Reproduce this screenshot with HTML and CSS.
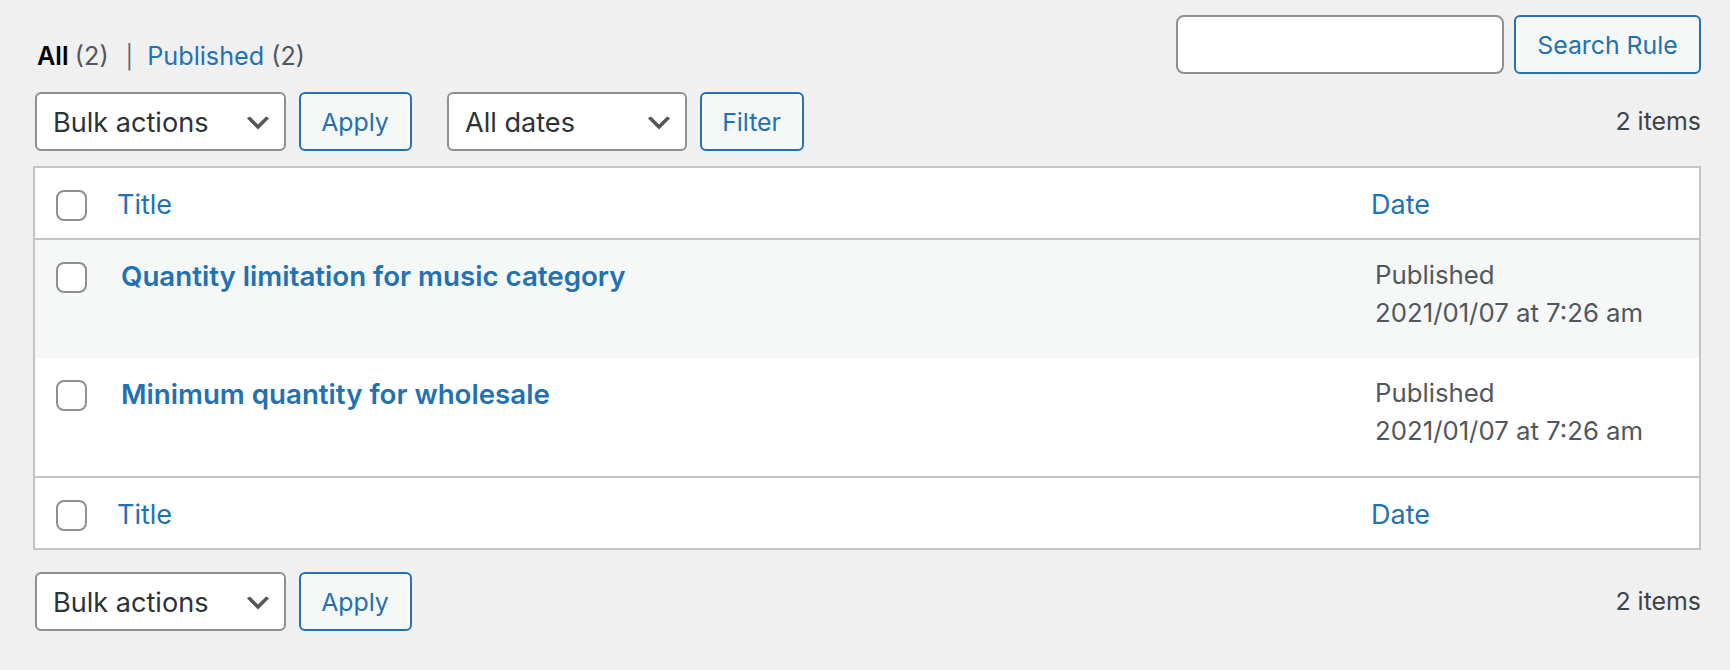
FILE: index.html
```html
<!DOCTYPE html>
<html lang="en">
<head>
<meta charset="utf-8">
<title>Rules</title>
<link rel="stylesheet" href="styles.css">
</head>
<body>
<div class="wrap">
  <div class="top-row">
    <ul class="subsubsub">
      <li class="all"><a class="current" href="#">All <span class="count">(2)</span></a><span class="sep">|</span></li>
      <li class="publish"><a href="#">Published <span class="count">(2)</span></a></li>
    </ul>
    <div class="search-box">
      <input class="search-input" type="search" aria-label="Search Rule">
      <button class="button btn-search" type="button">Search Rule</button>
    </div>
  </div>

  <div class="tablenav">
    <div class="actions">
      <div class="select sel-bulk"><span>Bulk actions</span><svg class="chev" viewBox="0 0 20 20" width="32" height="32"><path d="M5 6l5 5 5-5 2 1-7 7-7-7 2-1z" fill="#555"/></svg></div>
      <button class="button btn-apply" type="button">Apply</button>
    </div>
    <div class="actions">
      <div class="select sel-dates"><span>All dates</span><svg class="chev" viewBox="0 0 20 20" width="32" height="32"><path d="M5 6l5 5 5-5 2 1-7 7-7-7 2-1z" fill="#555"/></svg></div>
      <button class="button btn-filter" type="button">Filter</button>
    </div>
    <div class="displaying-num">2 items</div>
  </div>

  <table class="widefat">
    <colgroup><col class="c-check"><col><col class="c-date"></colgroup>
    <thead>
      <tr>
        <th class="check-column"><span class="cb"></span></th>
        <th class="col-title"><a href="#">Title</a></th>
        <th class="col-date"><a href="#">Date</a></th>
      </tr>
    </thead>
    <tbody>
      <tr class="alt">
        <td class="check-column"><span class="cb"></span></td>
        <td class="col-title"><a class="row-title" href="#">Quantity limitation for music category</a></td>
        <td class="col-date">Published<br>2021/01/07 at 7:26 am</td>
      </tr>
      <tr>
        <td class="check-column"><span class="cb"></span></td>
        <td class="col-title"><a class="row-title" href="#">Minimum quantity for wholesale</a></td>
        <td class="col-date">Published<br>2021/01/07 at 7:26 am</td>
      </tr>
    </tbody>
    <tfoot>
      <tr>
        <th class="check-column"><span class="cb"></span></th>
        <th class="col-title"><a href="#">Title</a></th>
        <th class="col-date"><a href="#">Date</a></th>
      </tr>
    </tfoot>
  </table>

  <div class="tablenav bottom">
    <div class="actions">
      <div class="select sel-bulk"><span>Bulk actions</span><svg class="chev" viewBox="0 0 20 20" width="32" height="32"><path d="M5 6l5 5 5-5 2 1-7 7-7-7 2-1z" fill="#555"/></svg></div>
      <button class="button btn-apply" type="button">Apply</button>
    </div>
    <div class="displaying-num">2 items</div>
  </div>
</div>
</body>
</html>
```

FILE: styles.css
```css
html, body {
  margin: 0;
  padding: 0;
  background: #f0f0f1;
}
body {
  font-family: Inter, "Liberation Sans", sans-serif;
  color: #3c434a;
  font-size: 26px;
  line-height: 1.5;
}
a {
  color: #2271b1;
  text-decoration: none;
}
.wrap {
  padding: 15px 29px 0 33px;
}
.top-row {
  display: flex;
  justify-content: space-between;
  align-items: flex-start;
  height: 59px;
}
.subsubsub {
  list-style: none;
  margin: 22px 0 0 0;
  padding: 0 0 0 4px;
  display: flex;
  color: #646970;
  font-size: 25.2px;
  line-height: 39px;
  white-space: pre;
}
.subsubsub li {
  margin: 0;
}
.subsubsub a.current {
  color: #000;
  font-weight: 600;
}
.subsubsub .count {
  color: #50575e;
  font-weight: 400;
}
.subsubsub .sep {
  margin: 0 14px 0 17px;
  font-size: 23px;
}
.search-box {
  display: flex;
  gap: 10px;
}
.search-input {
  box-sizing: border-box;
  width: 328px;
  height: 59px;
  border: 2px solid #8c8f94;
  border-radius: 8px;
  background: #fff;
  margin: 0;
  padding: 0 16px;
  font: inherit;
  outline: none;
}
.button {
  box-sizing: border-box;
  height: 59px;
  margin: 0;
  padding: 2px 16px 0;
  border: 2px solid #2271b1;
  border-radius: 6px;
  background: #f6f7f7;
  color: #2271b1;
  font-family: inherit;
  font-size: 24.8px;
  line-height: 53px;
  text-align: center;
  white-space: nowrap;
}
.btn-search { width: 187px; }
.btn-apply { width: 113px; }
.btn-filter { width: 104px; }

.tablenav {
  display: flex;
  align-items: center;
  height: 59px;
  margin-top: 18px;
  padding-left: 2px;
}
.tablenav.bottom {
  margin-top: 22px;
}
.actions {
  display: flex;
  gap: 12.5px;
  margin-right: 35.5px;
}
.select {
  box-sizing: border-box;
  height: 59px;
  display: flex;
  align-items: center;
  border: 2px solid #8c8f94;
  border-radius: 6px;
  background: #fff;
  color: #2c3338;
  font-size: 27.1px;
  padding: 0 10px 0 16px;
}
.select span {
  flex: 1;
  padding-top: 4px;
}
.chev {
  display: block;
  margin-top: 2px;
}
.sel-bulk { width: 251px; }
.sel-dates { width: 240px; }
.displaying-num {
  margin-left: auto;
  color: #3c434a;
  font-size: 24.9px;
  padding-top: 1px;
}

.widefat {
  width: 100%;
  table-layout: fixed;
  border-spacing: 0;
  border: 2px solid #c3c4c7;
  background: #fff;
  margin-top: 15px;
}
.c-check { width: 62px; }
.c-date { width: 348px; }
.widefat th, .widefat td {
  text-align: left;
  vertical-align: top;
  font-weight: 400;
  line-height: 38px;
}
.widefat th {
  font-size: 27px;
}
.widefat thead th {
  border-bottom: 2px solid #c3c4c7;
  padding: 18px 20px 14px 20px;
}
.widefat tfoot th {
  border-top: 2px solid #c3c4c7;
  padding: 18px 20px 14px 20px;
}
.widefat td {
  padding: 17px 20px 25px 24px;
  color: #50575e;
  font-size: 25.75px;
}
.widefat .check-column {
  padding: 22px 0 0 21px;
  line-height: 0;
}
.widefat tr.alt td {
  background: #f6f7f7;
}
.widefat td.col-date {
  padding: 16px 20px 26px 24px;
}
.row-title {
  font-size: 27.7px;
  font-weight: 600;
}
.cb {
  display: block;
  box-sizing: border-box;
  width: 31px;
  height: 31px;
  border: 2px solid #8c8f94;
  border-radius: 8px;
  background: #fff;
}
```
